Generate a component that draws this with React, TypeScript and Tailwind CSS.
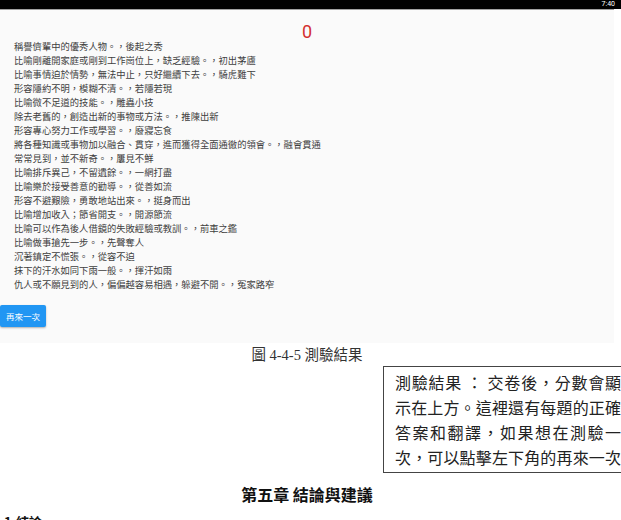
import React from 'react';

const results = [
  '稱譽儕輩中的優秀人物。，後起之秀',
  '比喻剛離開家庭或剛到工作崗位上，缺乏經驗。，初出茅廬',
  '比喻事情迫於情勢，無法中止，只好繼續下去。，騎虎難下',
  '形容隱約不明，模糊不清。，若隱若現',
  '比喻微不足道的技能。，雕蟲小技',
  '除去老舊的，創造出新的事物或方法。，推陳出新',
  '形容專心努力工作或學習。，廢寢忘食',
  '將各種知識或事物加以融合、貫穿，進而獲得全面通徹的領會。，融會貫通',
  '常常見到，並不新奇。，屢見不鮮',
  '比喻排斥異己，不留遺餘。，一網打盡',
  '比喻樂於接受善意的勸導。，從善如流',
  '形容不避艱險，勇敢地站出來。，挺身而出',
  '比喻增加收入；節省開支。，開源節流',
  '比喻可以作為後人借鏡的失敗經驗或教訓。，前車之鑑',
  '比喻做事搶先一步。，先聲奪人',
  '沉著鎮定不慌張。，從容不迫',
  '抹下的汗水如同下雨一般。，揮汗如雨',
  '仇人或不願見到的人，偏偏越容易相遇，躲避不開。，冤家路窄',
];

const note = [
  '測驗結果 ： 交卷後，分數會顯',
  '示在上方。這裡還有每題的正確',
  '答案和翻譯，如果想在測驗一',
  '次，可以點擊左下角的再來一次',
];

export default function App() {
  return (
    <div className="w-[621px] h-[520px] overflow-hidden bg-white font-['Noto_Sans_CJK_TC',sans-serif]">
      {/* phone status bar */}
      <div className="h-[9px] w-full bg-black flex items-center justify-end pr-[6px]">
        <span className="text-[7px] leading-none text-white font-['Roboto',sans-serif]">7:40</span>
      </div>
      <div className="h-px w-[614px] bg-[#a0a0a0]" />

      {/* quiz result screen */}
      <div className="w-[614px] h-[333px] bg-[#fafafa] flex flex-col">
        <div className="h-[29px] pt-[13px] text-center text-[18px] leading-[18px] text-[#d32f2f] font-['Roboto',sans-serif]">
          0
        </div>
        <div className="pl-[14px] text-[9.3px] leading-[14px] text-[#404040]">
          {results.map((line, i) => (
            <div key={i} className="whitespace-nowrap">{line}</div>
          ))}
        </div>
        <button className="mt-[14px] h-[22px] w-[46px] rounded-[2px] bg-[#2196f3] text-[8.5px] text-white shadow-[0_1px_2px_rgba(0,0,0,0.3)]">
          再來一次
        </button>
      </div>

      {/* figure caption */}
      <div className="w-[614px] mt-[4px] text-center text-[14.5px] leading-[17px] text-[#333] font-['Liberation_Serif','Noto_Sans_CJK_TC',serif]">
        圖 4-4-5 測驗結果
      </div>

      {/* callout */}
      <div className="flex pl-[383px] mt-[2px]">
        <div className="w-[250px] shrink-0 border border-[#444] pt-[3px] pb-[2px] pl-[11px]">
          {note.map((line, i) => (
            <div key={i} className="w-[226px] text-[16px] leading-[25px] text-[#222] text-justify [text-align-last:justify]">
              {line}
            </div>
          ))}
        </div>
      </div>

      {/* next chapter */}
      <div className="w-[614px] mt-[13px] text-center text-[16px] leading-[16px] font-bold text-[#111]">
        第五章 結論與建議
      </div>
      <div className="mt-[12px] pl-[4px] text-[13px] leading-[16px] font-bold text-[#111]">
        1.結論
      </div>
    </div>
  );
}
